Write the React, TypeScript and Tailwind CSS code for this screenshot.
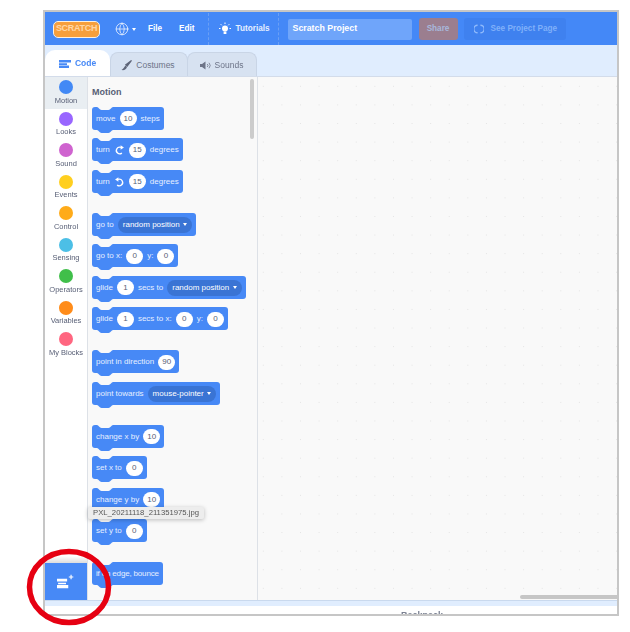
import { Globe } from 'lucide-react';

const categories = [
  { name: 'Motion', color: 'bg-[#4289f5]' },
  { name: 'Looks', color: 'bg-[#9966ff]' },
  { name: 'Sound', color: 'bg-[#cf63cf]' },
  { name: 'Events', color: 'bg-[#ffcf1f]' },
  { name: 'Control', color: 'bg-[#ffab19]' },
  { name: 'Sensing', color: 'bg-[#4cbfe6]' },
  { name: 'Operators', color: 'bg-[#40bf4a]' },
  { name: 'Variables', color: 'bg-[#ff8c1a]' },
  { name: 'My Blocks', color: 'bg-[#ff6680]' },
];

function Num({ v }: { v: string }) {
  return (
    <span className="flex h-[15px] min-w-[17px] items-center justify-center rounded-full bg-white px-[4px] text-[8px] text-[#575e75]">
      {v}
    </span>
  );
}

function Drop({ v }: { v: string }) {
  return (
    <span className="flex h-[16px] items-center gap-[3.5px] rounded-full bg-[#3a74d4] pl-[5px] pr-[5px] text-[8px] text-white">
      {v}
      <span className="h-0 w-0 border-x-[2.5px] border-t-[3px] border-x-transparent border-t-white" />
    </span>
  );
}

function Turn({ flip }: { flip?: boolean }) {
  return (
    <svg width="11" height="12" viewBox="0 0 12 12" className={flip ? '-scale-x-100' : ''}>
      <path d="M7.6 3.2 A3.6 3.6 0 1 0 8.6 9.2" fill="none" stroke="white" strokeWidth="1.5" />
      <path d="M7.2 0.8 L10.8 3.2 L7.2 5.6 Z" fill="white" />
    </svg>
  );
}

function Block({ children, group }: { children: React.ReactNode; group?: boolean }) {
  return (
    <div
      className={`relative flex h-[23px] w-fit items-center gap-[4px] rounded-[3px] bg-[#4789f6] px-[4px] pt-[1px] text-[8px] whitespace-nowrap text-[#e6efff] ${
        group ? 'mt-[20px]' : 'mt-[8.5px]'
      }`}
    >
      <svg width="16" height="3" viewBox="0 0 16 3" className="absolute top-0 left-[5px]">
        <path d="M0 0 C1.5 0 2.5 3 4.5 3 H11.5 C13.5 3 14.5 0 16 0 Z" fill="#f9f9f9" />
      </svg>
      <svg width="16" height="3" viewBox="0 0 16 3" className="absolute top-full left-[5px]">
        <path d="M0 0 C1.5 0 2.5 3 4.5 3 H11.5 C13.5 3 14.5 0 16 0 Z" fill="#4789f6" />
      </svg>
      {children}
    </div>
  );
}

export default function App() {
  return (
    <div className="relative h-[632px] w-[630px] overflow-hidden bg-white pt-[10px] pl-[43px] font-['Liberation_Sans',sans-serif]">
      <div className="flex h-[606px] w-[576px] flex-col overflow-hidden border-2 border-[#c6c6c6] blur-[0.5px]">
        {/* top bar */}
        <div className="flex h-[33px] shrink-0 items-center bg-[#4488f7] pt-[1px] text-[8.2px] font-bold text-white">
          <div className="ml-[9px] flex h-[15px] w-[45px] items-center justify-center rounded-[4px] bg-[#f79f3c] text-[9px] tracking-[-0.3px] text-[#ffd7a6] outline-[1.5px] outline-[#fff0dc]">
            SCRATCH
          </div>
          <Globe size={14} strokeWidth={1.2} className="ml-[16px]" />
          <span className="ml-[3px] h-0 w-0 border-x-[2.5px] border-t-[3px] border-x-transparent border-t-white" />
          <span className="ml-[12px]">File</span>
          <span className="ml-[17px]">Edit</span>
          <div className="ml-[13px] h-full border-l border-dashed border-[#6a9ff5]" />
          <svg width="14" height="14" viewBox="0 0 14 14" className="ml-[9px]">
            <circle cx="7" cy="6.5" r="3" fill="white" />
            <rect x="5.6" y="9.5" width="2.8" height="2.5" fill="white" />
            <path d="M7 0.5V2 M1 6.5H2.5 M11.5 6.5H13 M2.7 2.2L3.8 3.3 M11.3 2.2L10.2 3.3" stroke="white" strokeWidth="1" />
          </svg>
          <span className="ml-[4px] text-[#e6efff]">Tutorials</span>
          <div className="ml-[8px] h-full border-l border-dashed border-[#6a9ff5]" />
          <div className="ml-[9px] flex h-[21px] w-[124px] items-center rounded-[2px] bg-[#6fa5fa] pl-[5px] text-[8.8px]">Scratch Project</div>
          <div className="ml-[7px] flex h-[22px] w-[39px] items-center justify-center rounded-[3px] bg-[#9b7e8f] text-[#a8b8dc]">Share</div>
          <div className="ml-[6px] flex h-[22px] w-[102px] items-center rounded-[3px] bg-[#3f81ef] pl-[10px] text-[#7fb0fa]">
            <svg width="10" height="10" viewBox="0 0 10 10">
              <path d="M3.6 1.2 A3.8 3.8 0 0 0 3.6 8.8 M6.4 1.2 A3.8 3.8 0 0 1 6.4 8.8" fill="none" stroke="#8fbafc" strokeWidth="1.4" />
            </svg>
            <span className="ml-[7px]">See Project Page</span>
          </div>
        </div>

        {/* tabs */}
        <div className="flex h-[31px] shrink-0 items-end bg-[#e0edfe] text-[8.5px] text-[#6d7488]">
          <div className="z-10 flex h-[26px] w-[65px] items-center justify-center gap-[4px] rounded-t-[10px] bg-white pt-[1px] font-bold text-[#4789f6]">
            <svg width="12" height="8" viewBox="0 0 12 8">
              <path d="M0 0H12V2.5H0Z M0 3.2H8V5H0Z M0 5.5H10V8H0Z" fill="#4789f6" />
            </svg>
            Code
          </div>
          <div className="flex h-[24px] w-[78px] items-center justify-center gap-[4px] rounded-t-[8px] border border-b-0 border-[#c9d5e6] bg-[#d7e2f1] pr-[2px] pt-[1px]">
            <svg width="11" height="11" viewBox="0 0 11 11">
              <path d="M10.5 0.5 L4.8 4.8 L6.2 6.2 Z" fill="#5f6679" stroke="#5f6679" strokeWidth="1.2" />
              <path d="M4.5 5.5 L6 7 C5.5 9.5 3 10.5 0.5 10 C2.5 9 3 7 4.5 5.5 Z" fill="#5f6679" />
            </svg>
            Costumes
          </div>
          <div className="-ml-px flex h-[24px] w-[70px] items-center justify-center gap-[4px] rounded-t-[8px] border border-b-0 border-[#c9d5e6] bg-[#d7e2f1] pr-[1px] pt-[1px]">
            <svg width="11" height="9" viewBox="0 0 11 9">
              <path d="M0 3H2L5.5 0.5V8.5L2 6H0Z" fill="#6d7488" />
              <path d="M7.2 3A2 2 0 0 1 7.2 6 M9 1.8A4 4 0 0 1 9 7.2" fill="none" stroke="#6d7488" strokeWidth="0.8" />
            </svg>
            Sounds
          </div>
        </div>

        {/* main */}
        <div className="flex min-h-0 flex-1 border-t border-[#d3dcea]">
          <div className="flex w-[42px] shrink-0 flex-col bg-white">
            <div className="flex-1">
              {categories.map((c, i) => (
                <div
                  key={c.name}
                  className={`flex h-[31.5px] flex-col items-center pt-[3px] text-[7.5px] leading-[9px] whitespace-nowrap text-[#575e75] ${
                    i === 0 ? 'bg-[#e9eef2]' : ''
                  }`}
                >
                  <span className={`mb-[1.5px] h-[14px] w-[14px] shrink-0 rounded-full ${c.color}`} />
                  {c.name}
                </div>
              ))}
            </div>
            <div className="h-[7px] bg-gradient-to-b from-transparent to-[#dddddd]" />
            <div className="flex h-[37px] shrink-0 items-center justify-center bg-[#4789f6]">
              <svg width="18" height="15" viewBox="0 0 16 13">
                <path d="M0 4H9V6.5H0Z M1 7.5H8V9H1Z M0 9.5H10V12.5H0Z" fill="white" />
                <path d="M12.5 0.5V4.5 M10.5 2.5H14.5" stroke="white" strokeWidth="1" />
              </svg>
            </div>
          </div>

          <div className="relative w-[171px] shrink-0 border-x border-[#dde1e7] bg-[#f9f9f9] pl-[4px]">
            <div className="absolute top-[2px] right-[3px] h-[60px] w-[4px] rounded-full bg-[#cccccc]" />
            <div className="pt-[10px] text-[9px] leading-[11px] font-bold text-[#575e75]">Motion</div>
            <div className="mt-[0.5px]">
              <Block>move <Num v="10" /> steps</Block>
              <Block>turn <Turn /> <Num v="15" /> degrees</Block>
              <Block>turn <Turn flip /> <Num v="15" /> degrees</Block>
              <Block group>go to <Drop v="random position" /></Block>
              <Block>go to x: <Num v="0" /> y: <Num v="0" /></Block>
              <Block>glide <Num v="1" /> secs to <Drop v="random position" /></Block>
              <Block>glide <Num v="1" /> secs to x: <Num v="0" /> y: <Num v="0" /></Block>
              <Block group>point in direction <Num v="90" /></Block>
              <Block>point towards <Drop v="mouse-pointer" /></Block>
              <Block group>change x by <Num v="10" /></Block>
              <Block>set x to <Num v="0" /></Block>
              <Block>change y by <Num v="10" /></Block>
              <Block>set y to <Num v="0" /></Block>
              <Block group><span className="tracking-[-0.17px]">if on edge, bounce</span></Block>
            </div>
          </div>

          <div className="relative flex-1 bg-[#f9f9f9] bg-[radial-gradient(circle,#e4e4e4_0.6px,transparent_0.8px)] bg-[length:18.6px_18.6px] bg-[position:-4px_0px]">
            <div className="absolute right-0 bottom-[1px] h-[4px] w-[97px] rounded-l-full bg-[#c6c6c6]" />
          </div>
        </div>

        {/* backpack */}
        <div className="h-[6px] shrink-0 border-t border-[#c9d9ee] bg-[#e0edfe]" />
        <div className="h-[8px] shrink-0 overflow-hidden bg-white pl-[356px] text-[9px] leading-[11px] font-bold text-[#7a8091] pt-[4px]">
          Backpack
        </div>
      </div>

      {/* file name tooltip */}
      <div className="absolute top-[507px] left-[88px] flex h-[12px] w-[116px] items-center justify-center rounded-[2px] bg-[#ededed] text-[7.7px] text-[#555555] shadow-[0_1px_4px_rgba(0,0,0,0.25)] blur-[0.3px]">
        PXL_20211118_211351975.jpg
      </div>

      {/* annotation ring */}
      <svg width="86" height="78" viewBox="0 0 86 78" className="absolute top-[548px] left-[26px]">
        <ellipse cx="43" cy="39" rx="39.5" ry="35.5" fill="none" stroke="#e60012" strokeWidth="5.5" />
      </svg>
    </div>
  );
}
